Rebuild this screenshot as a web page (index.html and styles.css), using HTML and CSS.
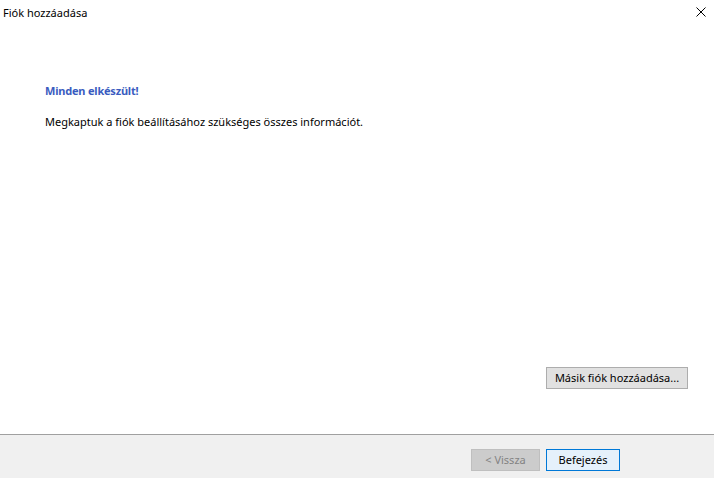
FILE: index.html
```html
<!DOCTYPE html>
<html lang="hu">
<head>
<meta charset="utf-8">
<title>Fiók hozzáadása</title>
<link rel="stylesheet" href="styles.css">
</head>
<body>
<div class="dialog">
  <header class="titlebar">
    <span class="title">Fiók hozzáadása</span>
    <span class="close" aria-label="Bezárás">
      <svg width="10" height="10" viewBox="0 0 10 10"><path d="M0.5 0.5 L9.5 9.5 M9.5 0.5 L0.5 9.5" stroke="#000" stroke-width="1" fill="none"/></svg>
    </span>
  </header>
  <main class="content">
    <h1 class="heading">Minden elkészült!</h1>
    <p class="text">Megkaptuk a fiók beállításához szükséges összes információt.</p>
    <button class="btn btn-other">Másik fiók hozzáadása...</button>
  </main>
  <footer class="footer">
    <button class="btn btn-back" disabled>&lt; Vissza</button>
    <button class="btn btn-finish">Befejezés</button>
  </footer>
</div>
</body>
</html>
```
FILE: styles.css
```css
html, body {
  margin: 0;
  padding: 0;
  background: #ffffff;
}
body {
  font-family: "Noto Sans", "Open Sans", "DejaVu Sans", sans-serif;
  font-size: 11px;
  color: #000;
}
.dialog {
  width: 714px;
  height: 478px;
  display: flex;
  flex-direction: column;
  background: #fff;
}
.titlebar {
  height: 24px;
  display: flex;
  align-items: center;
  justify-content: space-between;
  padding: 0 3px 0 3px;
  flex: none;
}
.title {
  font-size: 11px;
  line-height: 16px;
  margin-top: 2px;
}
.close {
  width: 20px;
  height: 24px;
  display: flex;
  align-items: center;
  justify-content: center;
}
.content {
  flex: 1;
  display: flex;
  flex-direction: column;
  padding: 59px 26px 45px 45px;
}
.heading {
  margin: 0;
  font-size: 11px;
  line-height: 16px;
  font-weight: bold;
  letter-spacing: -0.2px;
  color: #3a5cc0;
}
.text {
  margin: 15px 0 0 0;
  font-size: 11px;
  line-height: 16px;
}
.btn {
  font-family: inherit;
  font-size: 11px;
  line-height: 16px;
  height: 22px;
  padding: 0 6px;
  border: 1px solid #adadad;
  background: #e1e1e1;
  color: #000;
  border-radius: 0;
  box-sizing: border-box;
  white-space: nowrap;
}
.btn-other {
  margin-top: auto;
  align-self: flex-end;
  width: 142px;
}
.footer {
  flex: none;
  height: 44px;
  box-sizing: border-box;
  border-top: 1px solid #a0a0a0;
  background: #f0f0f0;
  display: flex;
  justify-content: flex-end;
  align-items: flex-start;
  gap: 6px;
  padding: 14px 94px 0 0;
}
.btn-back {
  width: 69px;
  background: #cccccc;
  border-color: #bfbfbf;
  color: #838383;
}
.btn-finish {
  width: 74px;
  background: #e5f1fb;
  border-color: #0078d7;
}
```
